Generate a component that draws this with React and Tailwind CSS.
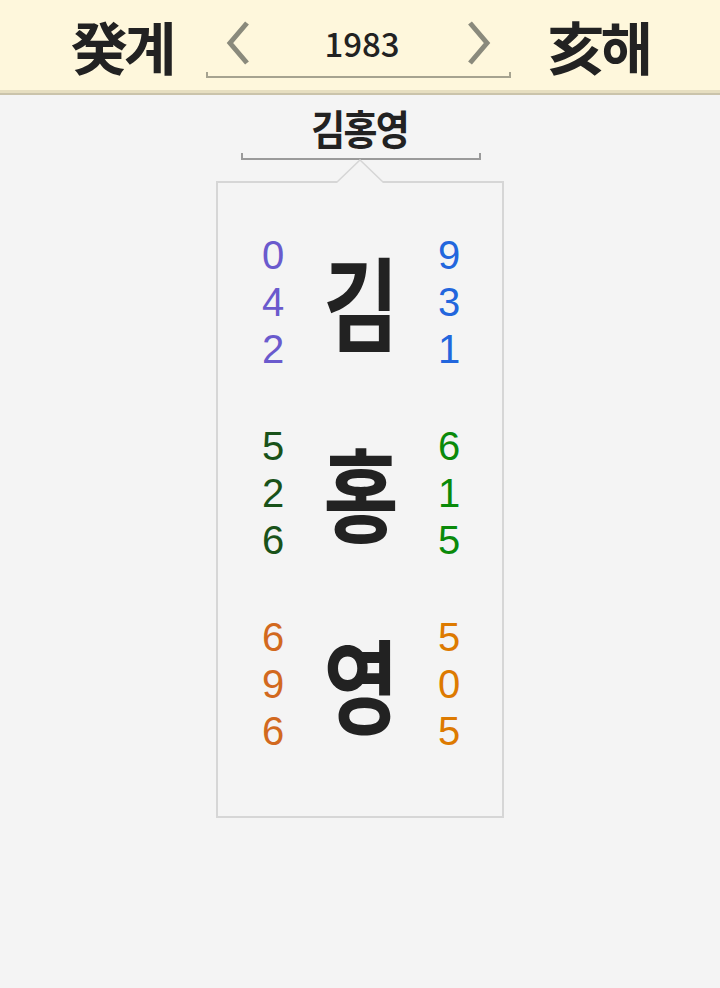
export default function App() {
  const rows = [
    { ch: '김', left: ['0', '4', '2'], right: ['9', '3', '1'], lc: 'text-[#6a5acd]', rc: 'text-[#2266dd]' },
    { ch: '홍', left: ['5', '2', '6'], right: ['6', '1', '5'], lc: 'text-[#195219]', rc: 'text-[#0a8a0a]' },
    { ch: '영', left: ['6', '9', '6'], right: ['5', '0', '5'], lc: 'text-[#d2691e]', rc: 'text-[#dd7a00]' },
  ];

  const font = { fontFamily: '"Noto Sans CJK KR", "Noto Sans", sans-serif' };
  const digitFont = { fontFamily: '"Liberation Sans", Arial, sans-serif' };

  return (
    <div className="min-h-[988px] bg-[#f4f4f4] text-[#222]" style={font}>
      {/* Header */}
      <div className="bg-[#fef7dc]">
        <div className="h-[90px] flex items-center justify-center">
          <div className="text-[57px] font-bold leading-none tracking-[-4px] mr-[33px]">癸계</div>
          <div className="relative w-[305px] h-[90px] flex items-center">
            <div className="absolute left-0 right-0 top-[72px] h-[6px] border-l-2 border-r-2 border-b-2 border-[#a6a390]" />
            <svg className="ml-[19px] mb-[4px]" width="26" height="44" viewBox="0 0 26 44">
              <polyline points="22,2 5,22 22,42" fill="none" stroke="#8a8a7c" strokeWidth="5" />
            </svg>
            <div className="flex-1 text-center text-[33px] font-medium leading-none mb-[4px] pl-[8px]">1983</div>
            <svg className="mr-[19px] mb-[4px]" width="26" height="44" viewBox="0 0 26 44">
              <polyline points="4,2 21,22 4,42" fill="none" stroke="#8a8a7c" strokeWidth="5" />
            </svg>
          </div>
          <div className="text-[57px] font-bold leading-none tracking-[-4px] ml-[37px]">亥해</div>
        </div>
        <div className="h-[3px] bg-[#e6dec0]" />
        <div className="h-[2px] bg-[#cac3aa]" />
      </div>

      {/* Name */}
      <div className="flex flex-col items-center">
        <div className="mt-[6px] text-[41px] font-bold leading-[52px] tracking-[-2px] scale-x-[0.9]">김홍영</div>
        <div className="w-[240px] h-[7px] border-l-2 border-r-2 border-b-2 border-[#9a9a9a] ml-[1px]" />

        {/* Card */}
        <div className="relative mt-[21px] w-[288px] border-2 border-[#d6d6d6] pt-[49px] pb-[61px] pl-[30px] pr-[28px] flex flex-col gap-[50px]">
          <svg className="absolute left-[116px] top-[-24px]" width="52" height="26" viewBox="0 0 52 26">
            <polygon points="2,24 26,1 50,24" fill="#f4f4f4" />
            <polyline points="2,24 26,1 50,24" fill="none" stroke="#d6d6d6" strokeWidth="1.5" />
            <rect x="0" y="24" width="52" height="2" fill="#f4f4f4" />
          </svg>
          {rows.map((r) => (
            <div key={r.ch} className="flex items-center">
              <div className={`w-[50px] flex flex-col items-center text-[40px] ${r.lc}`} style={digitFont}>
                {r.left.map((d, i) => (
                  <span key={i} className="block h-[47px] leading-[47px]">{d}</span>
                ))}
              </div>
              <div className="flex-1 flex justify-center">
                <span className="text-[102px] font-bold leading-none scale-x-[0.8] -translate-y-[3px]">{r.ch}</span>
              </div>
              <div className={`w-[50px] flex flex-col items-center text-[40px] ${r.rc}`} style={digitFont}>
                {r.right.map((d, i) => (
                  <span key={i} className="block h-[47px] leading-[47px]">{d}</span>
                ))}
              </div>
            </div>
          ))}
        </div>
      </div>
    </div>
  );
}
